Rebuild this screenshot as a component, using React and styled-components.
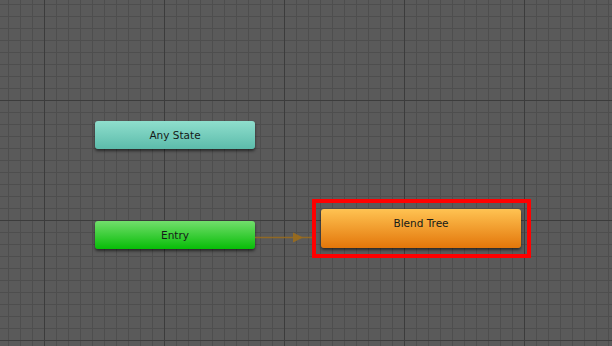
import React from "react";
import styled, { createGlobalStyle } from "styled-components";

const Global = createGlobalStyle`
  html, body { margin: 0; padding: 0; background: #595959; }
  #root { width: 612px; height: 346px; }
`;

const Canvas = styled.div`
  position: relative;
  width: 612px;
  height: 346px;
  overflow: hidden;
  background-color: #5a5a5a;
  background-image:
    linear-gradient(to right, #3c3c3c 1px, transparent 1px),
    linear-gradient(to bottom, #3c3c3c 1px, transparent 1px),
    linear-gradient(to right, #4e4e4e 1px, transparent 1px),
    linear-gradient(to bottom, #4e4e4e 1px, transparent 1px);
  background-size: 120px 120px, 120px 120px, 12px 12px, 12px 12px;
  background-position: 44px 0, 0 100px, 8px 0, 0 4px;
  font-family: "DejaVu Sans", "Liberation Sans", sans-serif;
`;

const palettes = {
  any: { top: "#8fdecd", bottom: "#5cbcab" },
  entry: { top: "#72de6c", bottom: "#07bd07" },
  blend: { top: "#ffc352", bottom: "#e3760a" },
};

const Node = styled.div`
  position: absolute;
  left: ${(p) => p.$x}px;
  top: ${(p) => p.$y}px;
  width: ${(p) => p.$w}px;
  height: ${(p) => p.$h}px;
  box-sizing: border-box;
  border-radius: 3px;
  background: linear-gradient(
    to bottom,
    ${(p) => palettes[p.$kind].top},
    ${(p) => palettes[p.$kind].bottom}
  );
  box-shadow: 0 2px 3px rgba(0, 0, 0, 0.55);
  display: flex;
  justify-content: center;
  align-items: ${(p) => (p.$kind === "blend" ? "flex-start" : "center")};
  padding-top: ${(p) => (p.$kind === "blend" ? "8px" : "0")};
  color: #151a18;
  font-size: 10.5px;
  line-height: 13px;
`;

const Highlight = styled.div`
  position: absolute;
  left: 312px;
  top: 199px;
  width: 219px;
  height: 59px;
  box-sizing: border-box;
  border: 4px solid #ff0000;
`;

const Arrow = styled.svg`
  position: absolute;
  left: 255px;
  top: 230px;
  overflow: visible;
`;

export default function App() {
  return (
    <>
      <Global />
      <Canvas>
        <Node $kind="any" $x={95} $y={121} $w={160} $h={28}>
          Any State
        </Node>
        <Node $kind="entry" $x={95} $y={221} $w={160} $h={28}>
          Entry
        </Node>
        <Arrow width="60" height="16" viewBox="0 0 60 16">
          <line x1="0" y1="7.5" x2="58" y2="7.5" stroke="#9a6c1c" strokeOpacity="0.85" strokeWidth="1.6" />
          <polygon points="38,2.5 48,7.5 38,12.5" fill="#9a6c1c" fillOpacity="0.9" />
        </Arrow>
        <Highlight />
        <Node $kind="blend" $x={321} $y={209} $w={200} $h={39}>
          Blend Tree
        </Node>
      </Canvas>
    </>
  );
}
